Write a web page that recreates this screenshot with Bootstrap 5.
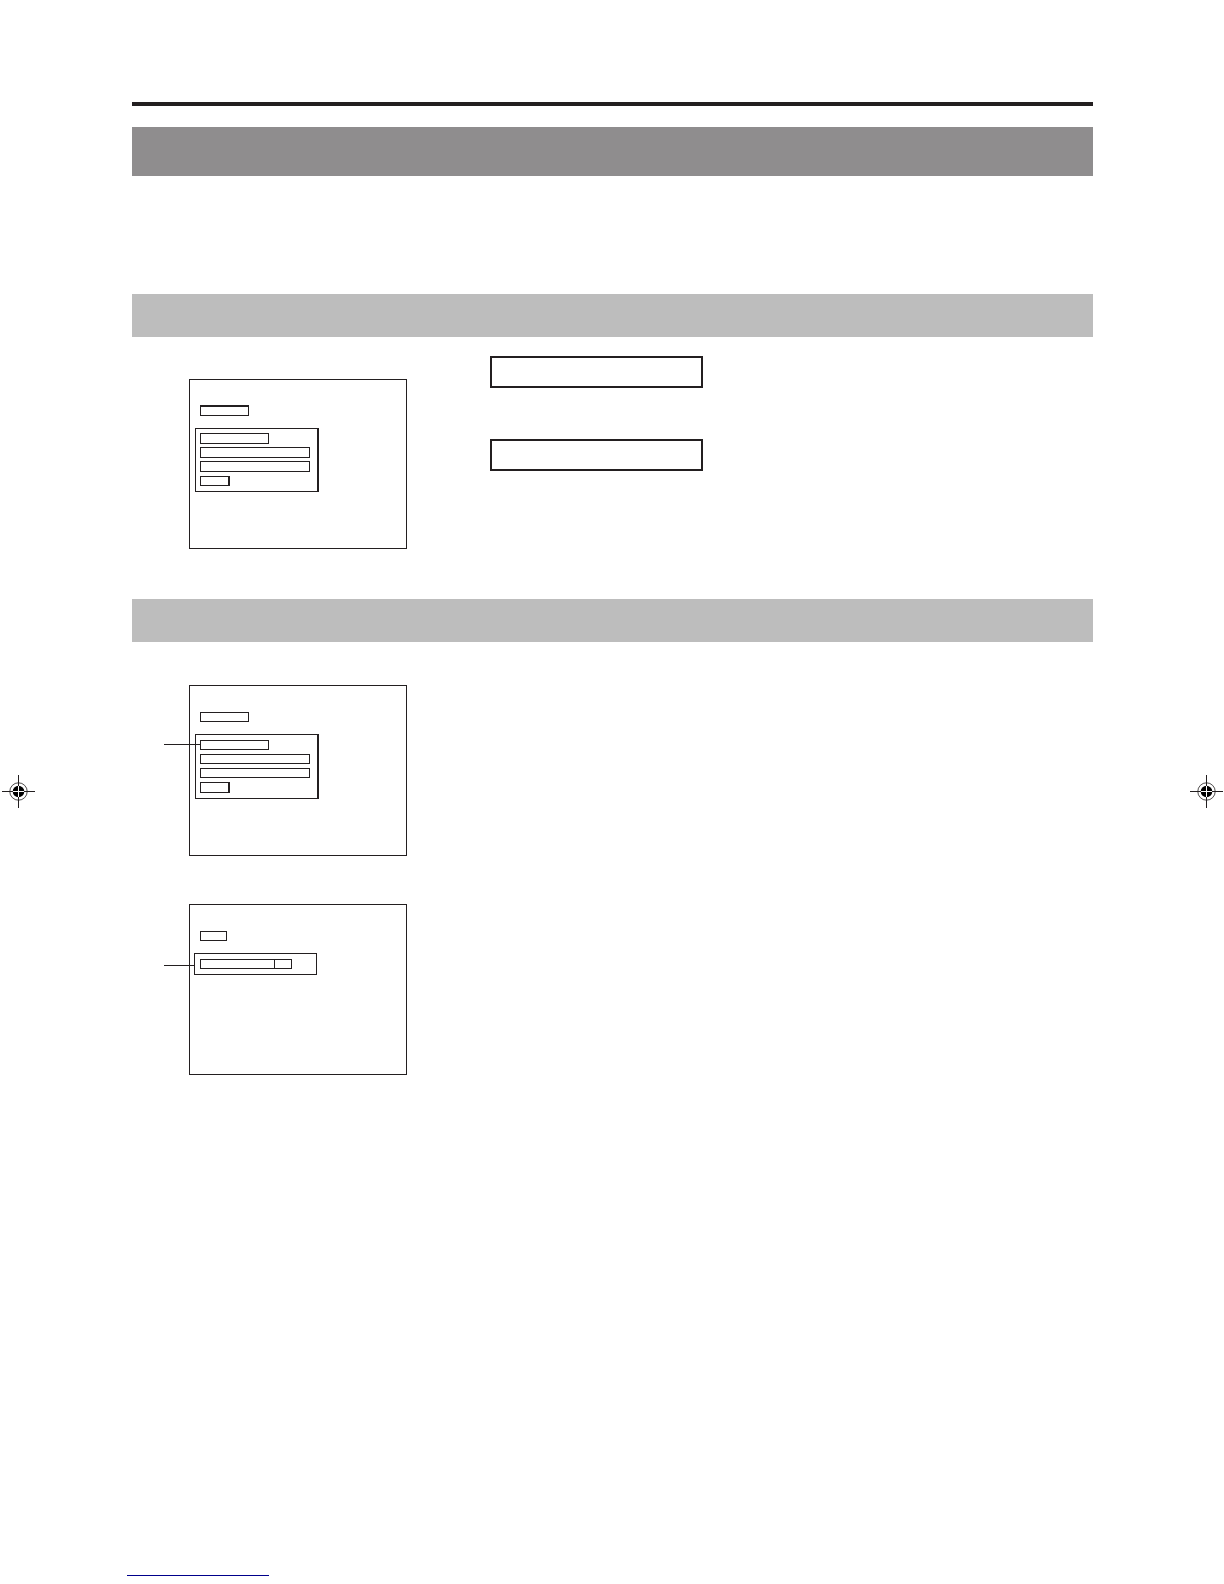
<!DOCTYPE html>
<html lang="en">
<head>
<meta charset="utf-8">
<meta name="viewport" content="width=device-width, initial-scale=1">
<title>Menu screens</title>
<link href="https://cdn.jsdelivr.net/npm/bootstrap@5.3.0/dist/css/bootstrap.min.css" rel="stylesheet">
<style>
  :root { --ink: #231f20; }
  body { background: #fff; color: var(--ink); font-family: "Liberation Sans", Arial, sans-serif; }
  .sheet { padding: 102px 131px 8px 132px; }
  .top-rule { height: 4px; margin-bottom: 21px; background: var(--ink); }
  .title-band { height: 49px; margin-bottom: 118px; background: #8f8d8e; }
  .section-band { height: 43px; background: #bdbdbd; }
  .section-body { padding: 42px 0 50px 57px; }
  .section-body.stacked { padding-top: 43px; gap: 48px; }
  .split { gap: 83px; }
  .legend-col { gap: 51px; margin-top: -23px; }
  .legend-box { width: 213px; height: 32px; border: 2px solid var(--ink); }

  /* Menu screen drawings */
  .screen { width: 218px; height: 171px; padding: 26px 0 0 10px; border: 1px solid var(--ink); }
  .cell { height: 10px; border: 1px solid var(--ink); }
  .panel { width: 124px; height: 65px; margin: 12px 0 0 -5px; padding: 5px 0 0 4px; gap: 4px; border: 1px solid var(--ink); border-right-width: 2px; }
  .w-tab { width: 49px; }
  .w-short { width: 27px; }
  .w-item { width: 69px; }
  .w-full { width: 110px; }
  .w-end { width: 30px; height: 11px; border-right-width: 2px; }
  .w-split { width: 92px; }
  .w-split span { width: 17px; border-left: 1px solid var(--ink); }
  .panel-single { width: 123px; height: 22px; margin-left: -6px; padding-left: 5px; border-right-width: 1px; }
  .compact { height: 170px; padding-top: 25px; }
  .compact .cell { height: 11px; }
  .compact .w-tab { border-top-width: 2px; }
  .compact .panel { height: 64px; padding-top: 4px; gap: 3px; }
  .compact .panel .w-end { height: 10px; margin-top: 1px; }

  /* Callout lines lie over the screen frame */
  .leader { height: 1px; left: -26px; background: var(--ink); }
  .leader-item { top: 58px; width: 36px; }
  .leader-panel { top: 60px; width: 31px; }

  .crop-mark { width: 33px; height: 33px; top: 50%; margin-top: -17px; }
  .crop-left { left: 2px; }
  .crop-right { right: 1px; }
  .foot-link { width: 142px; height: 1px; margin-left: -5px; background: #00008b; }
</style>
<script src="https://cdn.jsdelivr.net/npm/bootstrap@5.3.0/dist/js/bootstrap.bundle.min.js"></script>
</head>
<body>
<div class="sheet position-relative d-flex flex-column min-vh-100">
  <header>
    <div class="top-rule"></div>
    <div class="title-band"></div>
  </header>

  <main>
    <section>
      <div class="section-band"></div>
      <div class="section-body split d-flex align-items-start">
        <div class="screen compact flex-shrink-0">
          <div class="cell w-tab"></div>
          <div class="panel d-flex flex-column">
            <div class="cell w-item"></div>
            <div class="cell w-full"></div>
            <div class="cell w-full"></div>
            <div class="cell w-end"></div>
          </div>
        </div>
        <div class="legend-col d-flex flex-column">
          <div class="legend-box"></div>
          <div class="legend-box"></div>
        </div>
      </div>
    </section>

    <section>
      <div class="section-band"></div>
      <div class="section-body stacked d-flex flex-column align-items-start">
        <div class="screen position-relative">
          <div class="cell w-tab"></div>
          <div class="panel d-flex flex-column">
            <div class="cell w-item"></div>
            <div class="cell w-full"></div>
            <div class="cell w-full"></div>
            <div class="cell w-end"></div>
          </div>
          <div class="leader leader-item position-absolute"></div>
        </div>
        <div class="screen position-relative">
          <div class="cell w-short"></div>
          <div class="panel panel-single">
            <div class="cell w-split d-flex justify-content-end"><span></span></div>
          </div>
          <div class="leader leader-panel position-absolute"></div>
        </div>
      </div>
    </section>
  </main>

  <footer class="mt-auto">
    <div class="foot-link"></div>
  </footer>

  <svg class="crop-mark crop-left position-absolute" viewBox="0 0 33 33" aria-hidden="true">
    <circle cx="16.5" cy="16.5" r="8.7" fill="none" stroke="#231f20" stroke-width=".8"/>
    <circle cx="16.5" cy="16.5" r="5.8" fill="#000"/>
    <path d="M0 16.5H33M16.5 0V33" stroke="#231f20"/>
    <path d="M11 16.5H22M16.5 11V22" stroke="#fff"/>
  </svg>
  <svg class="crop-mark crop-right position-absolute" viewBox="0 0 33 33" aria-hidden="true">
    <circle cx="16.5" cy="16.5" r="8.7" fill="none" stroke="#231f20" stroke-width=".8"/>
    <circle cx="16.5" cy="16.5" r="5.8" fill="#000"/>
    <path d="M0 16.5H33M16.5 0V33" stroke="#231f20"/>
    <path d="M11 16.5H22M16.5 11V22" stroke="#fff"/>
  </svg>
</div>
</body>
</html>
